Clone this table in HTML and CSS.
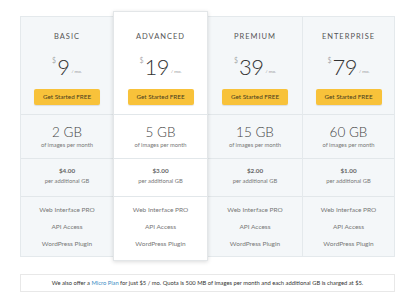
FILE: index.html
```html
<!DOCTYPE html>
<html>
<head>
<meta charset="utf-8">
<link rel="stylesheet" href="styles.css">
</head>
<body>
<div class="page">
  <div class="pricing">
    <div class="plan">
      <div class="head">
        <div class="title">BASIC</div>
        <div class="price"><span class="cur">$</span><span class="amt">9</span><span class="per">/ mo.</span></div>
        <div class="btn">Get Started FREE</div>
      </div>
      <div class="quota"><div class="gb">2 GB</div><div class="sub">of images per month</div></div>
      <div class="extra"><div class="cost">$4.00</div><div class="sub">per additional GB</div></div>
      <div class="features"><div>Web Interface PRO</div><div>API Access</div><div>WordPress Plugin</div></div>
    </div>
    <div class="plan featured">
      <div class="head">
        <div class="title">ADVANCED</div>
        <div class="price"><span class="cur">$</span><span class="amt">19</span><span class="per">/ mo.</span></div>
        <div class="btn">Get Started FREE</div>
      </div>
      <div class="quota"><div class="gb">5 GB</div><div class="sub">of images per month</div></div>
      <div class="extra"><div class="cost">$3.00</div><div class="sub">per additional GB</div></div>
      <div class="features"><div>Web Interface PRO</div><div>API Access</div><div>WordPress Plugin</div></div>
    </div>
    <div class="plan">
      <div class="head">
        <div class="title">PREMIUM</div>
        <div class="price"><span class="cur">$</span><span class="amt">39</span><span class="per">/ mo.</span></div>
        <div class="btn">Get Started FREE</div>
      </div>
      <div class="quota"><div class="gb">15 GB</div><div class="sub">of images per month</div></div>
      <div class="extra"><div class="cost">$2.00</div><div class="sub">per additional GB</div></div>
      <div class="features"><div>Web Interface PRO</div><div>API Access</div><div>WordPress Plugin</div></div>
    </div>
    <div class="plan last">
      <div class="head">
        <div class="title">ENTERPRISE</div>
        <div class="price"><span class="cur">$</span><span class="amt">79</span><span class="per">/ mo.</span></div>
        <div class="btn">Get Started FREE</div>
      </div>
      <div class="quota"><div class="gb">60 GB</div><div class="sub">of images per month</div></div>
      <div class="extra"><div class="cost">$1.00</div><div class="sub">per additional GB</div></div>
      <div class="features"><div>Web Interface PRO</div><div>API Access</div><div>WordPress Plugin</div></div>
    </div>
  </div>
  <div class="note">We also offer a <span class="link">Micro Plan</span> for just $5 / mo. Quota is 500 MB of images per month and each additional GB is charged at $5.</div>
</div>
</body>
</html>
```
FILE: styles.css
```css
* { box-sizing: border-box; }
html, body { margin: 0; padding: 0; background: #fff; }
body { font-family: Lato, "Open Sans", sans-serif; color: #555; }
.page { padding: 16px 0 0 20px; width: 395px; }
.pricing {
  display: grid;
  grid-template-columns: 93px 95px 94px 93px;
  align-items: start;
  width: 375px;
}
.plan {
  background: #f4f7f9;
  border-top: 1px solid #e4e9ec;
  border-bottom: 1px solid #e4e9ec;
  display: flex;
  flex-direction: column;
}
.plan:first-child { border-left: 1px solid #e4e9ec; }
.plan.last { border-left: 1px solid #e4e9ec; border-right: 1px solid #e4e9ec; }
.plan.featured {
  background: #fff;
  border: 1px solid #e3e6e8;
  margin: -5px 0 -4px;
  padding: 5px 0 4px;
  position: relative;
  z-index: 1;
  box-shadow: 0 1px 4px rgba(0,0,0,0.14);
}
.head {
  height: 97px;
  padding-top: 15px;
  display: flex;
  flex-direction: column;
  align-items: center;
}
.title {
  font-size: 7.5px;
  line-height: 10px;
  letter-spacing: 1px;
  color: #555;
  font-weight: 400;
}
.price {
  margin-top: 13px;
  height: 24px;
  display: flex;
  align-items: flex-start;
  color: #333;
}
.cur { font-size: 7px; line-height: 10px; color: #666; font-weight: 300; }
.amt { font-size: 22px; line-height: 24px; font-weight: 300; letter-spacing: -0.5px; margin-left: 1px; }
.per { font-size: 4.5px; line-height: 6px; margin-top: 14px; margin-left: 2px; color: #999; }
.btn {
  margin-top: 10px;
  width: 66px;
  height: 16px;
  background: #f8c23a;
  border-radius: 2px;
  box-shadow: 0 1px 1px rgba(0,0,0,0.1);
  font-size: 6.3px;
  line-height: 16px;
  text-align: center;
  color: #4a3e20;
}
.quota, .extra, .features {
  border-top: 1px solid #e2e7ea;
  display: flex;
  flex-direction: column;
  align-items: center;
  justify-content: center;
}
.quota { height: 44px; }
.gb { font-size: 13.5px; line-height: 16px; font-weight: 300; color: #444; }
.sub { font-size: 5.8px; line-height: 8px; color: #777; }
.quota .sub { margin-top: 1px; }
.extra { height: 38px; padding-bottom: 3px; }
.cost { font-size: 6.3px; line-height: 8px; font-weight: 700; color: #666; margin-bottom: 2px; }
.features { height: 60px; font-size: 6.5px; line-height: 17px; color: #777; }
.note {
  margin-top: 17px;
  width: 375px;
  height: 18px;
  border: 1px solid #e8e8e8;
  font-size: 5.8px;
  line-height: 16px;
  text-align: center;
  color: #333;
}
.link { color: #3a8dc5; position: relative; }
.link::after {
  content: "";
  position: absolute;
  left: -3px;
  right: -3px;
  bottom: -7px;
  height: 1.5px;
  background: #d0312d;
}
```
